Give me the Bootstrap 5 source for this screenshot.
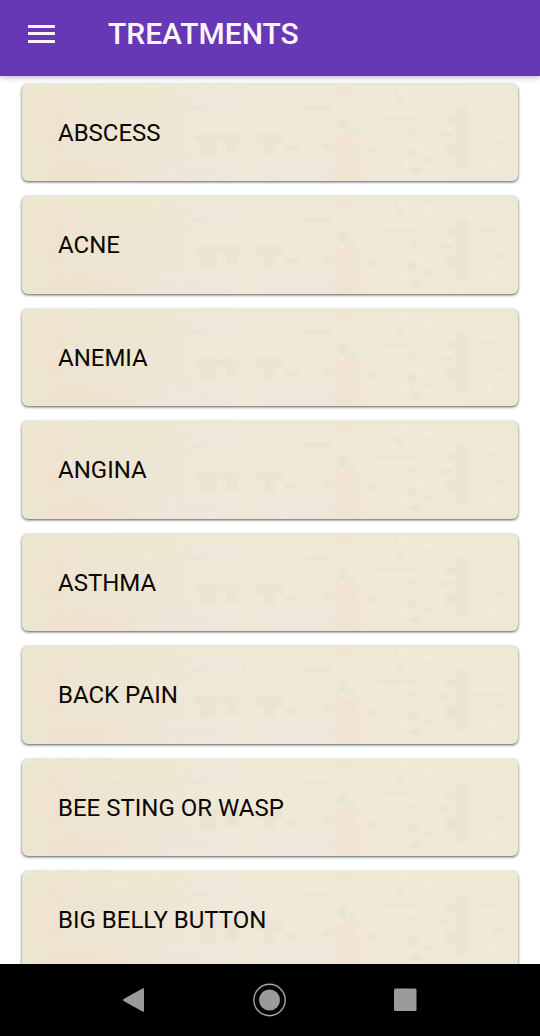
<!DOCTYPE html>
<html lang="en">
<head>
<meta charset="utf-8">
<meta name="viewport" content="width=device-width, initial-scale=1">
<title>Treatments</title>
<link href="https://cdn.jsdelivr.net/npm/bootstrap@5.3.0/dist/css/bootstrap.min.css" rel="stylesheet">
<style>
body { font-family: Roboto, "Liberation Sans", sans-serif; color: #0c0500; }
.app-bar { background: #6738b6; height: 76px; padding: 0 28px 8px; gap: 52px; box-shadow: 0 1px 6px rgba(60, 40, 110, .4); z-index: 2; }
.app-title { font-size: 30px; line-height: 36px; font-weight: 500; color: #fff4ff; }
.treatments { padding: 8px 22px 0; gap: 15px; grid-auto-rows: 97px 98px; }
.treatment {
  padding: 0 36px; font-size: 24px; line-height: 30px; color: inherit; border-radius: 6px;
  box-shadow: 0 1px 3px rgba(40, 45, 45, .8);
  /* aged paper: soft patches over a cream gradient */
  background: #eee8d7 url("data:image/svg+xml,%3Csvg xmlns='http://www.w3.org/2000/svg' viewBox='0 0 496 98' preserveAspectRatio='none'%3E%3Cdefs%3E%3ClinearGradient id='g'%3E%3Cstop stop-color='%23ece5d0'/%3E%3Cstop offset='.12' stop-color='%23ede4d1'/%3E%3Cstop offset='.4' stop-color='%23efe9d9'/%3E%3Cstop offset='1' stop-color='%23eee9d7'/%3E%3C/linearGradient%3E%3Cfilter id='b' color-interpolation-filters='sRGB'%3E%3CfeGaussianBlur stdDeviation='1.2'/%3E%3C/filter%3E%3Cfilter id='c' color-interpolation-filters='sRGB'%3E%3CfeGaussianBlur stdDeviation='5'/%3E%3C/filter%3E%3C/defs%3E%3Cpath fill='url(%23g)' d='M0 0h496v98H0z'/%3E%3Cg filter='url(%23c)' opacity='.75'%3E%3Cpath fill='%23ecead0' d='M-9-9h514V5H-9zM60 8h90v14H60z'/%3E%3Cpath fill='%23f1e1cf' d='M25 8h15v60H25zM26 80h86v20H26zM312 50h26v50h-26z'/%3E%3Cpath fill='%23eee6dd' d='M130 78h80v20h-80zM240 80h70v18h-70zM170 8h50v18h-50z'/%3E%3C/g%3E%3Cg filter='url(%23b)' opacity='.75'%3E%3Cpath fill='%23f3e3d2' d='M28 5h16v9H28zM37 14h8v8h-8zM315 2h14v9h-14zM313 54h28v9h-28zM326 86h18v10h-18z'/%3E%3Cpath fill='%23e8e3d1' d='M172 50h46v8h-46zM178 58h16v14h-16zM204 56h12v14h-12zM233 50h28v10h-28zM242 60h10v12h-10zM262 62h14v6h-14zM280 22h30v4h-30zM170 22h14v4h-14zM316 35h9v12h-9zM327 42h6v6h-6zM434 24h12v60h-12zM424 33h12v7h-12zM418 48h12v5h-12zM424 60h10v12h-10zM356 34h38v3h-38zM388 46h8v5h-8zM386 66h9v8h-9zM400 74h10v5h-10zM388 84h12v6h-12zM456 33h22v2h-22zM448 48h38v2h-38zM470 58h13v4h-13zM374 16h7v7h-7zM346 63h7v7h-7zM300 60h8v6h-8z'/%3E%3Cpath fill='%23f4eedf' d='M397 64h5v4h-5zM408 71h5v4h-5zM383 78h5v5h-5zM334 57h4v4h-4zM319 48h4v4h-4zM425 43h4v4h-4zM402 10h8v4h-8zM376 5h8v4h-8zM45 38h5v5h-5zM466 77h5v5h-5z'/%3E%3C/g%3E%3C/svg%3E") center / 100% 100%;
}
.nav-keys { background: #000; height: 72px; padding: 0 66px; z-index: 2; }
.nav-keys .btn { width: 135px; }
</style>
</head>
<body class="bg-white">
<div class="vh-100 d-flex flex-column overflow-hidden">
  <header class="app-bar d-flex align-items-center flex-shrink-0 position-relative">
    <button type="button" class="btn p-0 border-0 d-flex" aria-label="Open menu">
      <svg width="28" height="20" viewBox="0 0 28 20" fill="#fff4ff"><path d="M0 1h27v3H0zM0 8h27v3H0zM0 16h27v3H0z"/></svg>
    </button>
    <h1 class="app-title m-0">TREATMENTS</h1>
  </header>
  <main class="treatments flex-grow-1 overflow-hidden d-grid">
    <a href="#abscess" class="treatment d-flex align-items-center text-decoration-none">ABSCESS</a>
    <a href="#acne" class="treatment d-flex align-items-center text-decoration-none">ACNE</a>
    <a href="#anemia" class="treatment d-flex align-items-center text-decoration-none">ANEMIA</a>
    <a href="#angina" class="treatment d-flex align-items-center text-decoration-none">ANGINA</a>
    <a href="#asthma" class="treatment d-flex align-items-center text-decoration-none">ASTHMA</a>
    <a href="#back-pain" class="treatment d-flex align-items-center text-decoration-none">BACK PAIN</a>
    <a href="#sting" class="treatment d-flex align-items-center text-decoration-none">BEE STING OR WASP</a>
    <a href="#belly-button" class="treatment d-flex align-items-center text-decoration-none">BIG BELLY BUTTON</a>
  </main>
  <nav class="nav-keys d-flex justify-content-between align-items-center flex-shrink-0" aria-label="System">
    <button type="button" class="btn p-0 border-0" aria-label="Back"><svg width="34" height="34" viewBox="0 0 34 34"><path fill="#9b9b9b" d="M6.600 16.100 26 5.200q1-.5 1 1v21.600q0 1.500-1 1L6.600 17.900q-1.500-.9 0-1.800z"/></svg></button>
    <button type="button" class="btn p-0 border-0" aria-label="Home"><svg width="34" height="34" viewBox="0 0 34 34"><circle cx="16.500" cy="17" r="15.700" fill="none" stroke="#aaa" stroke-width="1.400"/><circle cx="16.500" cy="17" r="10.500" fill="#9b9b9b"/></svg></button>
    <button type="button" class="btn p-0 border-0" aria-label="Recent apps"><svg width="34" height="34" viewBox="0 0 34 34"><rect x="4" y="5.500" width="22.500" height="22.500" rx="1.500" fill="#9b9b9b"/></svg></button>
  </nav>
</div>
<script src="https://cdn.jsdelivr.net/npm/bootstrap@5.3.0/dist/js/bootstrap.bundle.min.js"></script>
</body>
</html>
